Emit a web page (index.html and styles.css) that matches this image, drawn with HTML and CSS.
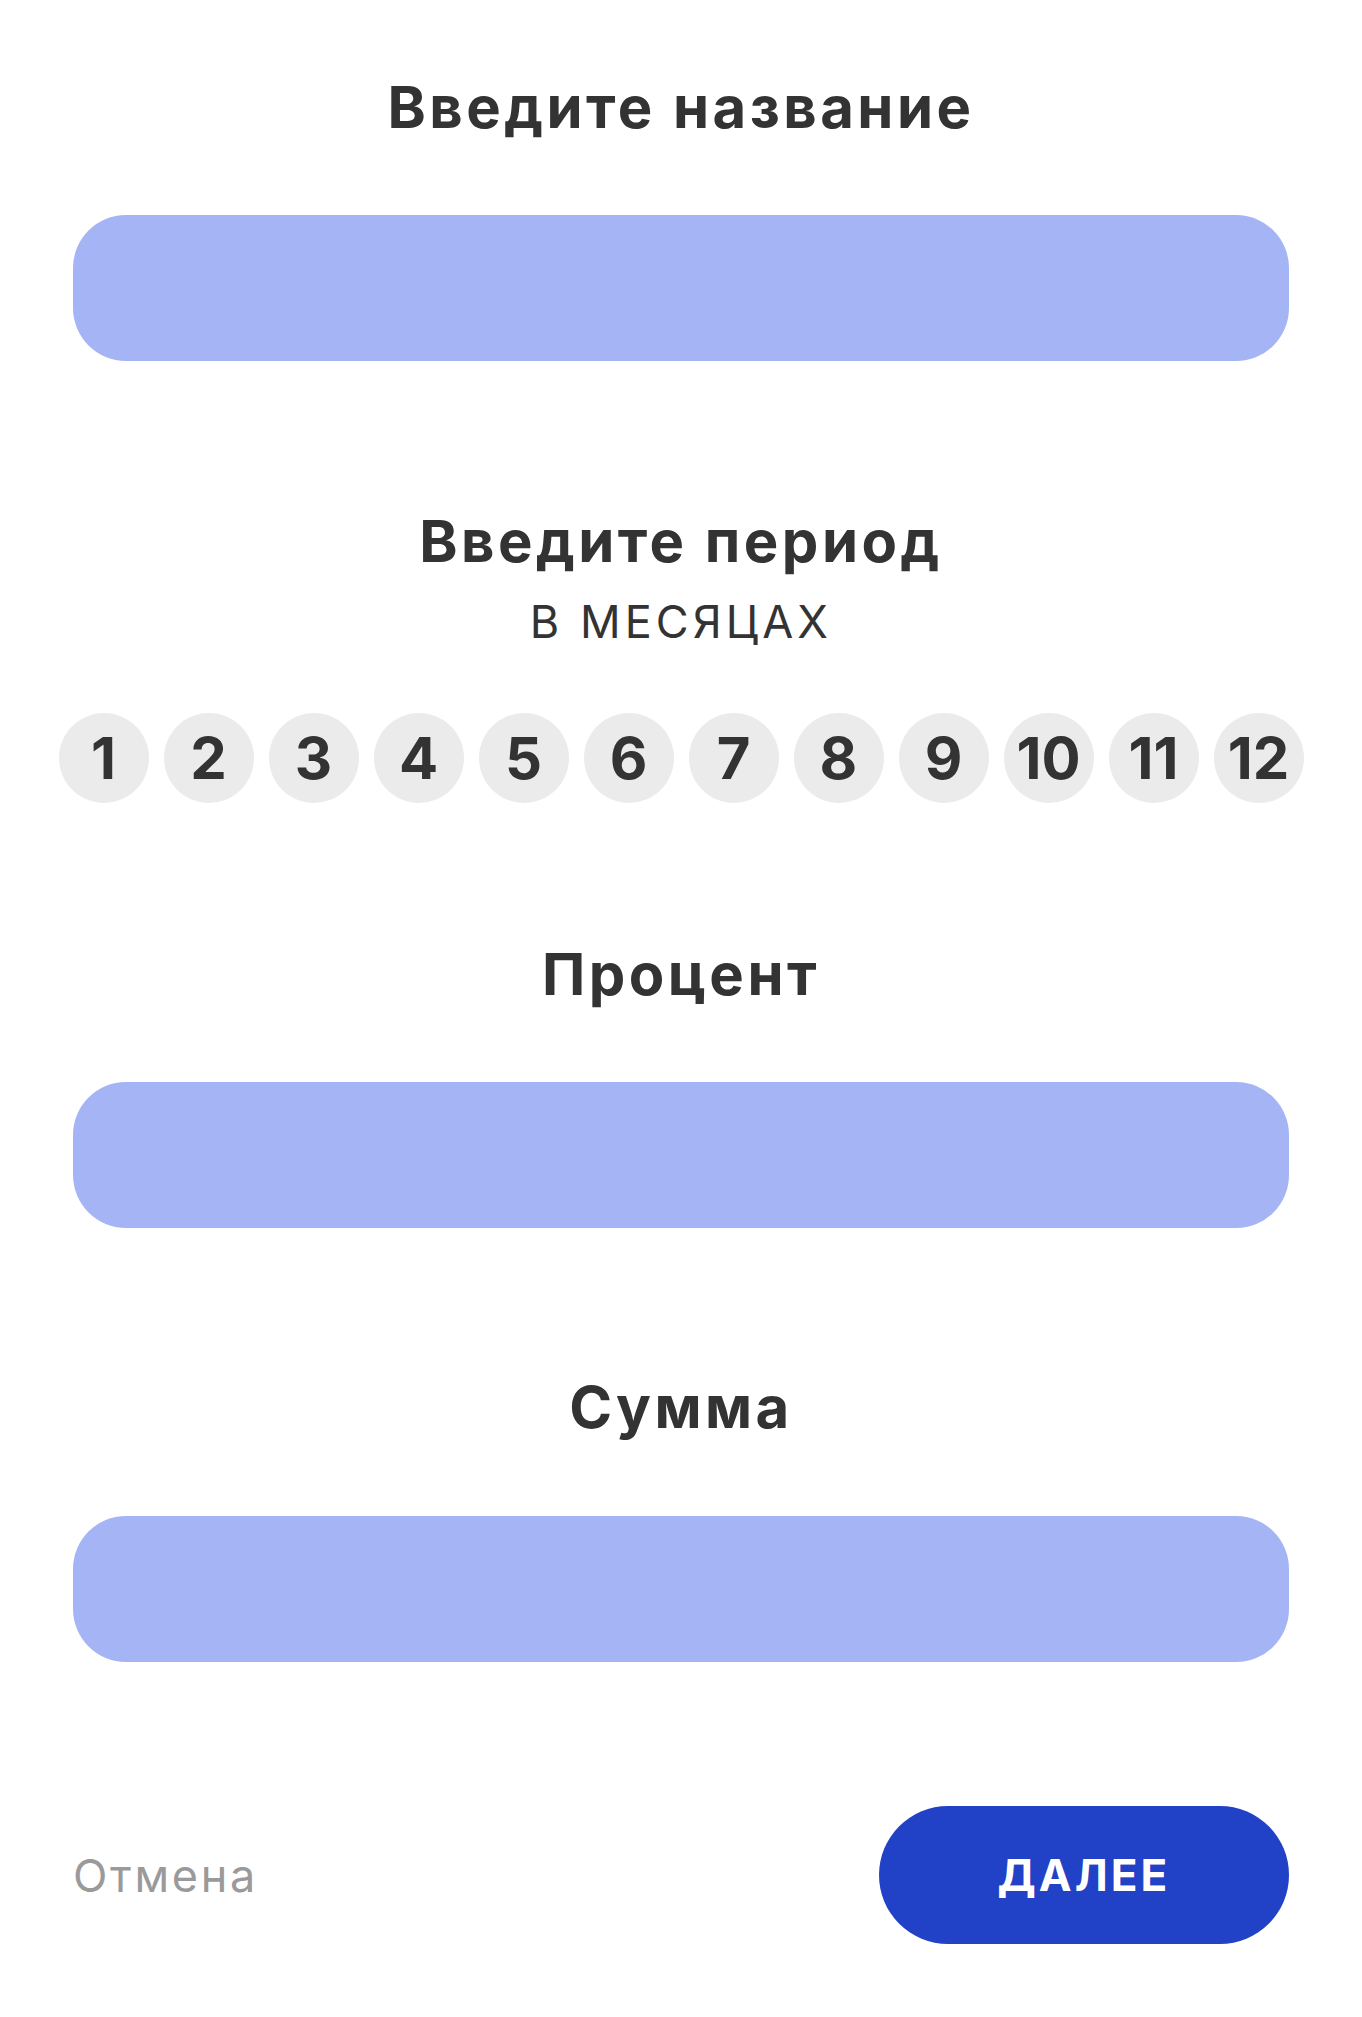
FILE: index.html
```html
<!DOCTYPE html>
<html lang="ru">
<head>
<meta charset="utf-8">
<title>Форма</title>
<link rel="stylesheet" href="styles.css">
</head>
<body>
<main class="form">
  <h2 class="title t-name">Введите название</h2>
  <div class="field f-name"></div>

  <h2 class="title t-period">Введите период</h2>
  <div class="subtitle">в месяцах</div>
  <div class="months">
    <span class="month">1</span>
    <span class="month">2</span>
    <span class="month">3</span>
    <span class="month">4</span>
    <span class="month">5</span>
    <span class="month">6</span>
    <span class="month">7</span>
    <span class="month">8</span>
    <span class="month">9</span>
    <span class="month">10</span>
    <span class="month">11</span>
    <span class="month">12</span>
  </div>

  <h2 class="title t-percent">Процент</h2>
  <div class="field f-percent"></div>

  <h2 class="title t-sum">Сумма</h2>
  <div class="field f-sum"></div>

  <div class="actions">
    <span class="cancel">Отмена</span>
    <button class="next">ДАЛЕЕ</button>
  </div>
</main>
</body>
</html>
```

FILE: styles.css
```css
html, body {
  margin: 0;
  padding: 0;
  background: #ffffff;
}

body {
  font-family: Inter, "Noto Sans", "DejaVu Sans", sans-serif;
  color: #333333;
}

.form {
  display: flex;
  flex-direction: column;
  align-items: stretch;
  padding: 72px 73px 0 73px;
}

.title {
  margin: 0;
  font-size: 58px;
  line-height: 70px;
  font-weight: 700;
  letter-spacing: 0.06em;
  text-align: center;
  color: #333333;
}

.field {
  height: 146px;
  border-radius: 53px;
  background: #a5b4f5;
}

.f-name { margin-top: 73px; }
.t-period { margin-top: 145px; }
.t-percent { margin-top: 136px; }
.f-percent { margin-top: 73px; }
.t-sum { margin-top: 144px; }
.f-sum { margin-top: 74px; }

.subtitle {
  margin-top: 19px;
  font-size: 45px;
  line-height: 54px;
  font-weight: 400;
  letter-spacing: 0.09em;
  text-transform: uppercase;
  text-align: center;
  color: #333333;
}

.months {
  margin: 64px -15px 0 -15px;
  display: flex;
  justify-content: center;
  gap: 15px;
}

.month {
  flex: 0 0 90px;
  width: 90px;
  height: 90px;
  border-radius: 50%;
  background: #ebebeb;
  display: flex;
  align-items: center;
  justify-content: center;
  font-size: 58px;
  font-weight: 700;
  color: #333333;
}

.actions {
  margin-top: 144px;
  display: flex;
  justify-content: space-between;
  align-items: center;
}

.cancel {
  font-size: 45px;
  font-weight: 400;
  letter-spacing: 0.06em;
  color: #9a9a9a;
}

.next {
  width: 410px;
  height: 138px;
  border: 0;
  border-radius: 69px;
  background: #2141c7;
  color: #ffffff;
  font-family: Inter, "Noto Sans", "DejaVu Sans", sans-serif;
  font-size: 44px;
  font-weight: 700;
  letter-spacing: 0.07em;
  padding: 0;
}
```
